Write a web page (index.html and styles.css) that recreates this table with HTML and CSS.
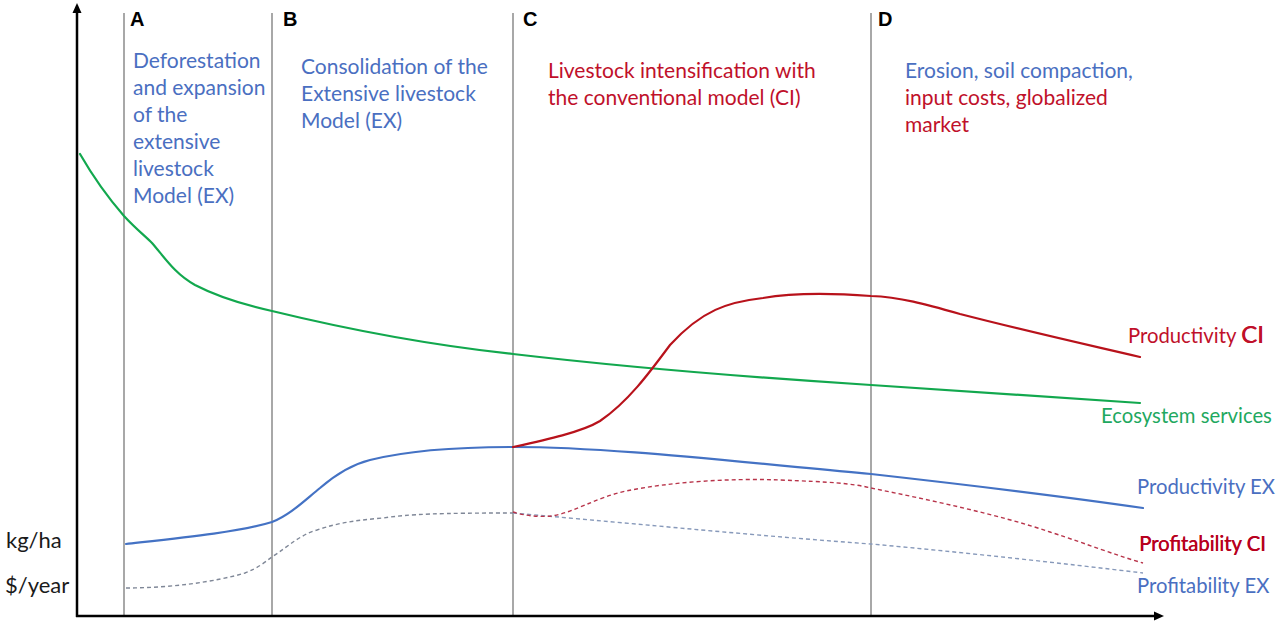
FILE: index.html
```html
<!DOCTYPE html>
<html lang="en">
<head>
<meta charset="utf-8">
<title>Livestock model phases</title>
<link rel="stylesheet" href="styles.css">
</head>
<body>
<div class="figure">
  <div class="phases">
    <section class="phase phase--a">
      <div class="phase-letter">A</div>
      <p class="phase-text blue">Deforestation<br>and expansion<br>of the<br>extensive<br>livestock<br>Model (EX)</p>
    </section>
    <section class="phase phase--b">
      <div class="phase-letter">B</div>
      <p class="phase-text blue">Consolidation of the<br>Extensive livestock<br>Model (EX)</p>
    </section>
    <section class="phase phase--c">
      <div class="phase-letter">C</div>
      <p class="phase-text red">Livestock intensification with<br>the conventional model (CI)</p>
    </section>
    <section class="phase phase--d">
      <div class="phase-letter">D</div>
      <p class="phase-text"><span class="blue">Erosion, soil compaction,</span><br><span class="red">input costs, globalized<br>market</span></p>
    </section>
  </div>

  <svg class="plot" width="1280" height="625" viewBox="0 0 1280 625" aria-hidden="true">
    <!-- axes -->
    <line class="axis" x1="77" y1="617" x2="77" y2="11"/>
    <polygon class="axis-head" points="77,3 72.5,13 81.5,13"/>
    <line class="axis" x1="76" y1="616" x2="1155" y2="616"/>
    <polygon class="axis-head" points="1164,616 1154,611.5 1154,620.5"/>

    <!-- Ecosystem services -->
    <path class="curve green" d="M80,154 C95,180 110,200 124,216 C135,228 145,236 152,243 C165,258 175,274 195,285 C220,298 245,305 272,311 C350,330 430,345 513,354 C650,370 760,378 871,385 C980,392 1060,398 1140,403"/>
    <!-- Productivity EX -->
    <path class="curve blue-line" d="M126,544 C180,538 240,532 272,522 C290,515 305,500 320,488 C335,475 350,465 370,460 C410,450 460,447 513,447 C600,447 700,458 871,474 C960,484 1060,496 1143,508"/>
    <!-- Productivity CI -->
    <path class="curve red-line" d="M513,447 C545,440 582,432 600,421 C628,402 650,372 670,345 C702,310 728,302 763,298 C792,293 830,293 871,296 C900,297 925,304 960,314 C1030,332 1080,343 1140,357"/>
    <!-- Profitability EX -->
    <path class="dash grey-dash" d="M126,588 C170,588 215,582 245,573 C258,568 265,562 272,557 C290,545 300,535 317,530 C340,522 360,520 383,518 C410,514 440,513 513,513"/>
    <path class="dash bluegrey-dash" d="M513,513 C650,525 760,536 871,544 C960,552 1060,563 1143,573"/>
    <!-- Profitability CI -->
    <path class="dash red-dash" d="M513,512 C525,516 540,517 552,516 C575,512 595,498 626,491 C670,482 730,478 780,480 C830,482 850,483 871,488 C930,500 1000,515 1050,532 C1090,545 1115,555 1143,563"/>
  </svg>

  <span class="axis-label label-kg">kg/ha</span>
  <span class="axis-label label-usd">$/year</span>

  <span class="series-label red label-pci">Productivity <span class="big">CI</span></span>
  <span class="series-label green-text label-eco">Ecosystem services</span>
  <span class="series-label blue label-pex">Productivity EX</span>
  <span class="series-label red strong label-fci">Profitability CI</span>
  <span class="series-label blue label-fex">Profitability EX</span>
</div>
</body>
</html>
```

FILE: styles.css
```css
html, body {
  margin: 0;
  padding: 0;
  background: #ffffff;
}

.figure {
  position: relative;
  width: 1280px;
  height: 625px;
  overflow: hidden;
  font-family: Lato, "Open Sans", sans-serif;
}

/* phase columns */
.phases {
  display: flex;
  margin-left: 123px;
  padding-top: 13px;
  height: 603px;
}

.phase {
  display: flex;
  flex-direction: column;
  border-left: 2px solid #a8a8a8;
  height: 603px;
}

.phase--a { width: 146px; }
.phase--b { width: 239px; }
.phase--c { width: 356px; }
.phase--d { flex: 1; }

.phase-letter {
  margin-top: -4px;
  font-family: "Liberation Sans", Arial, sans-serif;
  font-weight: 700;
  font-size: 20px;
  line-height: 20px;
  color: #000;
}

.phase-text {
  margin: 0;
  font-size: 21px;
  line-height: 27px;
  white-space: nowrap;
}

.phase--a .phase-letter { margin-left: 5px; }
.phase--b .phase-letter { margin-left: 10px; }
.phase--c .phase-letter { margin-left: 9px; }
.phase--d .phase-letter { margin-left: 6px; }

.phase--a .phase-text { margin-top: 17px; padding-left: 8px; }
.phase--b .phase-text { margin-top: 23px; padding-left: 28px; }
.phase--c .phase-text { margin-top: 27px; padding-left: 34px; }
.phase--d .phase-text { margin-top: 27px; padding-left: 33px; }

.blue { color: #4a6fc1; }
.red { color: #c0102a; }
.green-text { color: #1ea860; }

/* plot overlay */
.plot {
  position: absolute;
  left: 0;
  top: 0;
  pointer-events: none;
}

.axis {
  stroke: #000;
  stroke-width: 2.5;
}

.axis-head { fill: #000; }

.curve {
  fill: none;
  stroke-width: 2.2;
  stroke-linecap: round;
}

.green { stroke: #12a84e; }
.blue-line { stroke: #4472c4; }
.red-line { stroke: #b8121b; }

.dash {
  fill: none;
  stroke-width: 1.4;
  stroke-dasharray: 4 3;
}

.grey-dash { stroke: #7f8797; }
.bluegrey-dash { stroke: #8799ba; }
.red-dash { stroke: #b8344a; }

/* labels */
.axis-label,
.series-label {
  position: absolute;
  line-height: 27px;
  white-space: nowrap;
}

.axis-label {
  color: #1a1a1a;
  font-size: 22px;
}

.series-label {
  font-size: 20.3px;
}

.label-kg { left: 6px; top: 526px; }
.label-usd { left: 5px; top: 571px; }

.label-pci { left: 1128px; top: 320px; }
.label-eco { left: 1101px; top: 402px; }
.label-pex { left: 1137px; top: 473px; }
.label-fci { left: 1139px; top: 530px; }
.label-fex { left: 1137px; top: 572px; }

.big {
  font-size: 24px;
  text-shadow: 0.4px 0 0 #c0102a;
}

.strong {
  color: #b8001e;
  text-shadow: 0.4px 0 0 #b8001e;
}
```
